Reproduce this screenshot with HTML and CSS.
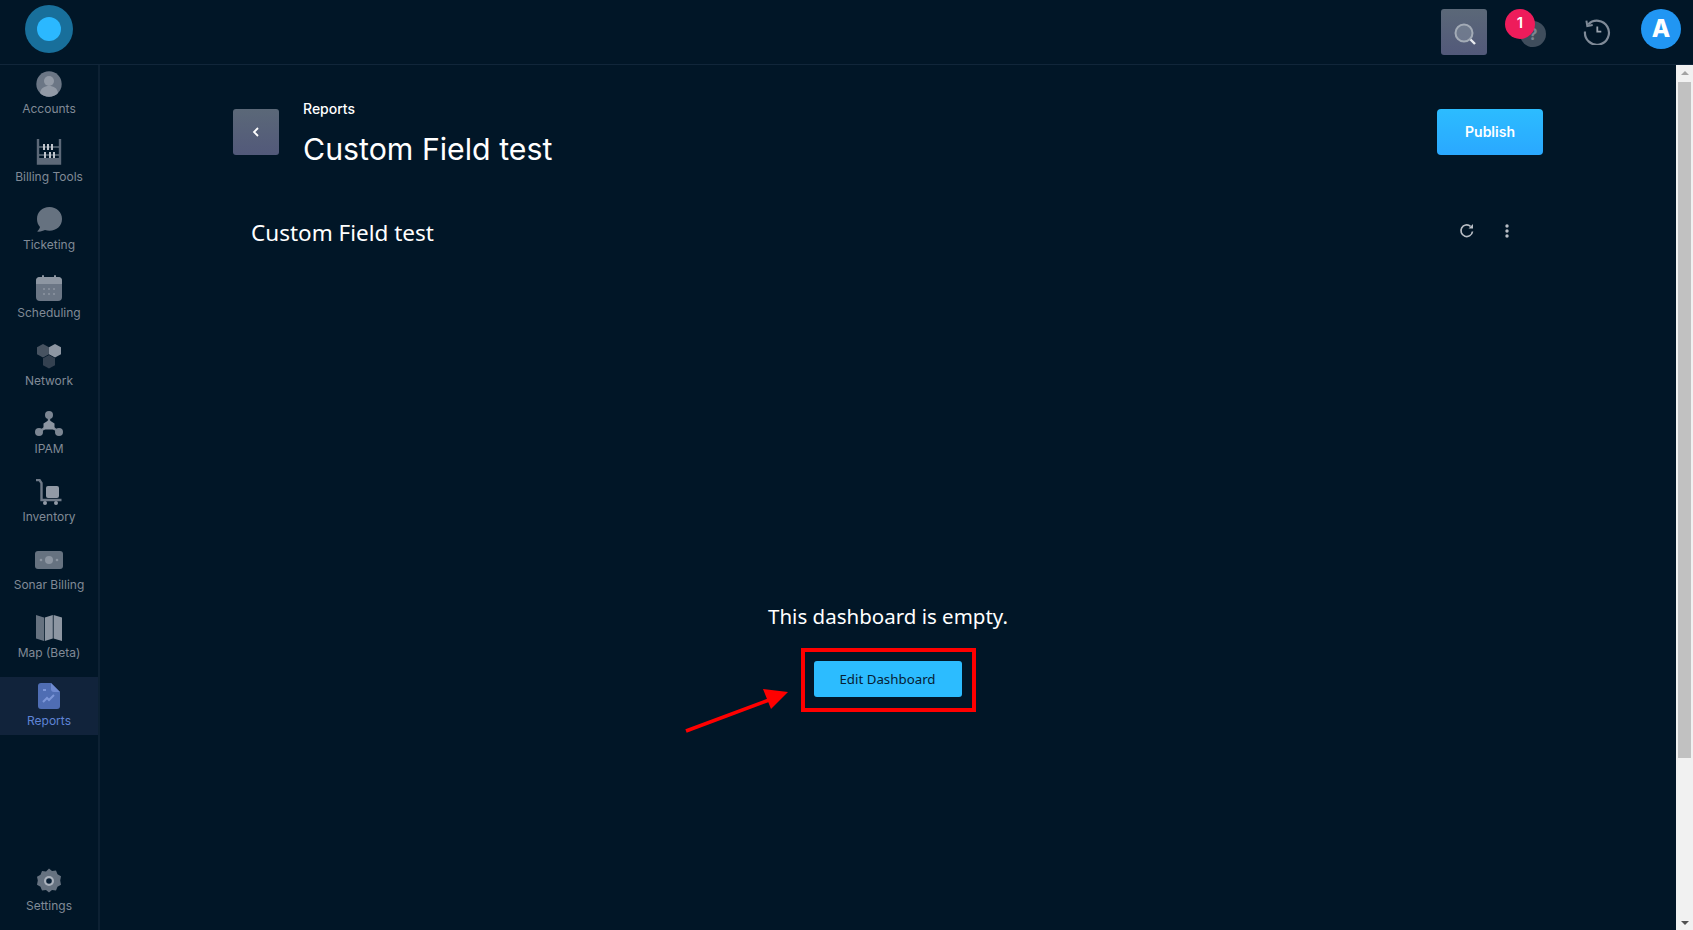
FILE: index.html
```html
<!DOCTYPE html>
<html>
<head>
  <meta charset="UTF-8">
  <title>Custom Field test</title>
  <link rel="stylesheet" href="styles.css">
</head>
<body>
  <header class="topbar">
    <div class="logo"><span class="logo-dot"></span></div>
    <div class="top-actions">
      <a class="search-btn">
        <svg width="26" height="26" viewBox="0 0 26 26"><circle cx="12" cy="12" r="8.5" fill="#8f98a6" fill-opacity=".45" stroke="#a3abb6" stroke-width="2"/><path d="M18.5 18.5l4.5 4.5" stroke="#e8eaee" stroke-width="2.4"/></svg>
      </a>
      <div class="help">
        <span class="help-circle">?</span>
        <span class="badge">1</span>
      </div>
      <a class="history">
        <svg width="28" height="28" viewBox="0 0 28 28" fill="none" stroke="#7f8a97" stroke-width="2.2"><path d="M5.2 7.5A12 12 0 1 1 2 14.5"/><path d="M3.4 3.6l.9 5.4 5.4-.9" stroke-width="2"/><path d="M14.3 9.5v5.2h4" stroke="#9aa3ae" stroke-width="1.8"/></svg>
      </a>
      <span class="avatar">A</span>
    </div>
  </header>

  <div class="layout">
    <nav class="sidebar">
      <a class="nav-item">
        <svg width="26" height="26" viewBox="0 0 26 26"><circle cx="13" cy="13" r="12.7" fill="#6b7685"/><circle cx="13" cy="10" r="5" fill="#929aa6"/><path d="M4 22c1-5 4-7 9-7s8 2 9 7a12.6 12.6 0 0 1-18 0z" fill="#929aa6"/></svg>
        <span>Accounts</span>
      </a>
      <a class="nav-item">
        <svg width="26" height="26" viewBox="0 0 26 26" fill="none"><path d="M2 0v24.500h22V0" stroke="#5d6978" stroke-width="2.400"/><path d="M3 19h20v5H3z" fill="#5d6978"/><path d="M3 8h20M3 16h20" stroke="#8b95a1" stroke-width="1.200"/><path d="M8 5v6M12 5v6M16 5v6M9 13v6M14 13v6M18 13v6" stroke="#c0c5cc" stroke-width="2"/></svg>
        <span>Billing Tools</span>
      </a>
      <a class="nav-item">
        <svg width="26" height="26" viewBox="0 0 26 26"><path d="M13.500 0C6 0 1 5 1 12c0 3 1 6 3 8-.5 2-2 3.500-3 4.500 3 .5 6-.5 8-1.500 1.500.5 3 .7 4.500.7C20.500 23.700 26 19 26 12S20.500 0 13.500 0z" fill="#667280"/></svg>
        <span>Ticketing</span>
      </a>
      <a class="nav-item">
        <svg width="26" height="26" viewBox="0 0 26 26"><rect x="0" y="2" width="26" height="24" rx="4" fill="#6b7685"/><path d="M0 6a4 4 0 0 1 4-4h18a4 4 0 0 1 4 4v3H0z" fill="#8d96a2"/><rect x="6" y="0" width="2" height="6" rx="1" fill="#8d96a2"/><rect x="18" y="0" width="2" height="6" rx="1" fill="#8d96a2"/><g fill="#8d96a2"><circle cx="8" cy="14" r="1"/><circle cx="13" cy="14" r="1"/><circle cx="18" cy="14" r="1"/><circle cx="8" cy="19" r="1"/><circle cx="13" cy="19" r="1"/><circle cx="18" cy="19" r="1"/></g></svg>
        <span>Scheduling</span>
      </a>
      <a class="nav-item">
        <svg width="26" height="26" viewBox="0 0 26 26"><path d="M7 1l6 3.300v7L7 14.600 1 11.300v-7z" fill="#475361"/><path d="M19 1l6 3.300v7l-6 3.300-6-3.300v-7z" fill="#8d96a2"/><path d="M13 12l6 3.300v7L13 25.600l-6-3.300v-7z" fill="#344150"/></svg>
        <span>Network</span>
      </a>
      <a class="nav-item">
        <svg width="28" height="26" viewBox="0 0 28 26"><path d="M14 4v12M14 14L4 21M14 14l10 7" stroke="#7c8693" stroke-width="2.400"/><circle cx="14" cy="4" r="4" fill="#7c8693"/><circle cx="4" cy="21" r="4" fill="#7c8693"/><circle cx="24" cy="21" r="4" fill="#7c8693"/><path d="M14 9l5.500 3.500v6h-11v-6z" fill="#8d96a2"/></svg>
        <span>IPAM</span>
      </a>
      <a class="nav-item">
        <svg width="28" height="26" viewBox="0 0 28 26" fill="none"><path d="M1 1h3.500l2 3v17h20" stroke="#6f7a88" stroke-width="2.400"/><rect x="11" y="7" width="13" height="12" rx="2" fill="#929aa6"/><circle cx="10" cy="24" r="2" fill="#929aa6"/><circle cx="21" cy="24" r="2" fill="#929aa6"/></svg>
        <span>Inventory</span>
      </a>
      <a class="nav-item">
        <svg width="28" height="26" viewBox="0 0 28 26"><rect x="0" y="4" width="28" height="18" rx="3" fill="#667280"/><circle cx="14" cy="13" r="4" fill="#8d96a2"/><circle cx="6" cy="13" r="1.300" fill="#8d96a2"/><circle cx="22" cy="13" r="1.300" fill="#8d96a2"/></svg>
        <span>Sonar Billing</span>
      </a>
      <a class="nav-item">
        <svg width="26" height="26" viewBox="0 0 26 26"><path d="M0 0l8 2.500V26l-8-2.500z" fill="#667280"/><path d="M8.800 2.500L16.800 0v23.500L8.800 26z" fill="#8d96a2"/><path d="M17.600 0L26 2.500V26l-8.400-2.500z" fill="#8d96a2"/></svg>
        <span>Map (Beta)</span>
      </a>
      <a class="nav-item active">
        <svg width="22" height="26" viewBox="0 0 22 26"><path d="M3 0h10l9 9v14a3 3 0 0 1-3 3H3a3 3 0 0 1-3-3V3a3 3 0 0 1 3-3z" fill="#4f6db3"/><path d="M13 0l9 9h-6a3 3 0 0 1-3-3z" fill="#6f8ad0"/><path d="M5 19l4-4 2 2 5-5" fill="none" stroke="#7c96d8" stroke-width="2"/><path d="M5 7h3" stroke="#7c96d8" stroke-width="2"/></svg>
        <span>Reports</span>
      </a>
      <a class="nav-item settings">
        <svg width="26" height="26" viewBox="0 0 26 26"><path d="M13 .500l3 2.500 4-.5 1.500 3.700 3.500 2-.8 4.300.8 4.300-3.500 2-1.500 3.700-4-.5-3 2.500-3-2.500-4 .5-1.500-3.700-3.500-2 .8-4.300L1 8.700l3.500-2L6 3l4 .5z" fill="#667280"/><circle cx="13" cy="13" r="5" fill="#aab1bb"/><circle cx="13" cy="13" r="2.800" fill="#0a2035"/></svg>
        <span>Settings</span>
      </a>
    </nav>

    <main class="content">
      <div class="page-head">
        <a class="back-btn">
          <svg width="8" height="10" viewBox="0 0 8 10" fill="none"><path d="M6 1L2 5l4 4" stroke="#fff" stroke-width="1.800"/></svg>
        </a>
        <div class="page-title">
          <div class="crumb">Reports</div>
          <h1>Custom Field test</h1>
        </div>
        <a class="publish">Publish</a>
      </div>

      <div class="dash-head">
        <h2>Custom Field test</h2>
        <div class="dash-tools">
          <svg width="16" height="16" viewBox="0 0 16 16" fill="none" stroke="#b9bec5" stroke-width="1.700"><path d="M13.500 8.500A5.800 5.800 0 1 1 11.500 3.300"/><path d="M14 1v4.500H9.500z" fill="#b9bec5" stroke="none"/></svg>
          <svg width="4" height="14" viewBox="0 0 4 14" fill="#b9bec5"><circle cx="2" cy="2" r="1.700"/><circle cx="2" cy="7" r="1.700"/><circle cx="2" cy="12" r="1.700"/></svg>
        </div>
      </div>

      <div class="empty">
        <p>This dashboard is empty.</p>
        <div class="edit-mark">
          <a class="edit-btn">Edit Dashboard</a>
        </div>
      </div>
    </main>

    <div class="scrollbar">
      <span class="arrow-up"></span>
      <span class="thumb"></span>
      <span class="arrow-down"></span>
    </div>
  </div>

  <!-- red arrow annotation from the screenshot -->
  <svg class="annotation" width="120" height="60" viewBox="0 0 120 60"><path d="M2 55L85 24" stroke="#f00" stroke-width="3.500"/><path d="M104 16L79 13l8 20z" fill="#f00"/></svg>
</body>
</html>
```

FILE: styles.css
```css
* {
  margin: 0;
  padding: 0;
  box-sizing: border-box;
}
html, body {
  height: 100%;
  overflow: hidden;
}
body {
  display: flex;
  flex-direction: column;
  background: #011627;
  color: #fff;
  font-family: Inter, "Liberation Sans", sans-serif;
}
a {
  text-decoration: none;
  cursor: pointer;
}

/* top bar */
.topbar {
  display: flex;
  justify-content: space-between;
  align-items: center;
  height: 65px;
  flex-shrink: 0;
  padding: 0 12px 6px 25px;
  border-bottom: 1px solid #11263a;
}
.logo {
  display: flex;
  align-items: center;
  justify-content: center;
  width: 48px;
  height: 48px;
  border-radius: 50%;
  background: #186f9b;
}
.logo-dot {
  width: 24px;
  height: 24px;
  border-radius: 50%;
  background: #2bb8ff;
}
.top-actions {
  display: flex;
  align-items: center;
}
.search-btn {
  display: flex;
  align-items: center;
  justify-content: center;
  width: 46px;
  height: 46px;
  margin-top: 6px;
  padding: 4px 0 0 1px;
  border-radius: 3px;
  background: linear-gradient(#5b6878, #52597a);
}
.help {
  position: relative;
  width: 46px;
  height: 46px;
  margin: 6px 0 0 18px;
}
.help-circle {
  position: absolute;
  left: 15px;
  top: 12px;
  width: 26px;
  height: 26px;
  border-radius: 50%;
  background: #3f4d5c;
  color: #7a8591;
  font-size: 16px;
  font-weight: 700;
  line-height: 26px;
  text-align: center;
}
.badge {
  position: absolute;
  left: 0;
  top: 0;
  width: 30px;
  height: 30px;
  border-radius: 50%;
  background: #ee1c5b;
  font-size: 15px;
  font-weight: 600;
  line-height: 28px;
  text-align: center;
}
.history {
  display: flex;
  margin: 4px 0 0 32px;
}
.avatar {
  width: 40px;
  height: 40px;
  margin: 0 0 0 30px;
  border-radius: 50%;
  background: #2196f3;
  font-size: 24px;
  font-weight: 800;
  line-height: 40px;
  text-align: center;
}

/* sidebar + page */
.layout {
  display: flex;
  flex: 1;
  min-height: 0;
}
.sidebar {
  display: flex;
  flex-direction: column;
  gap: 10px;
  width: 100px;
  flex-shrink: 0;
  padding-bottom: 10px;
  border-right: 2px solid #0d2133;
}
.nav-item {
  display: flex;
  flex-direction: column;
  align-items: center;
  height: 58px;
  padding-top: 6px;
  color: #808a96;
  font-size: 12px;
  line-height: 14px;
}
.nav-item svg {
  height: 26px;
  margin-bottom: 5px;
}
.nav-item.active {
  background: #11233b;
  color: #5f84d6;
}
.nav-item.settings {
  margin-top: auto;
}

.content {
  flex: 1;
  min-width: 0;
  padding: 35px 133px 0 133px;
}
.page-head {
  display: flex;
  align-items: flex-start;
}
.back-btn {
  display: flex;
  align-items: center;
  justify-content: center;
  width: 46px;
  height: 46px;
  margin-top: 9px;
  border-radius: 3px;
  background: linear-gradient(#5b6878, #52597a);
}
.page-title {
  margin-left: 24px;
}
.crumb {
  font-size: 14px;
  font-weight: 500;
  line-height: 18px;
}
.page-title h1 {
  margin-top: 10px;
  font-size: 30.300px;
  font-weight: 400;
  line-height: 42px;
}
.publish {
  width: 106px;
  height: 46px;
  margin: 9px 0 0 auto;
  border-radius: 4px;
  background: linear-gradient(#2cbcff, #2aa8ff);
  color: #fff;
  font-size: 14px;
  font-weight: 600;
  line-height: 46px;
  text-align: center;
}
.dash-head {
  display: flex;
  justify-content: space-between;
  align-items: center;
  margin-top: 47px;
  padding: 0 34px 0 18px;
}
.dash-head h2 {
  font-family: "Noto Sans", "Open Sans", sans-serif;
  font-size: 22.500px;
  font-weight: 400;
  line-height: 32px;
}
.dash-tools {
  display: flex;
  align-items: center;
  gap: 30px;
  margin-top: -4px;
}
.empty {
  display: flex;
  flex-direction: column;
  align-items: center;
  margin-top: 352px;
  font-family: "Noto Sans", "Open Sans", sans-serif;
}
.empty p {
  font-size: 20.500px;
  line-height: 30px;
}
.edit-mark {
  margin-top: 17px;
  padding: 9px 10px 11px 9px;
  border: 4px solid #f00;
}
.edit-btn {
  display: block;
  width: 148px;
  height: 36px;
  border-radius: 3px;
  background: #2cbcff;
  color: #062033;
  font-size: 13.300px;
  line-height: 36px;
  text-align: center;
}

/* fake browser scrollbar */
.scrollbar {
  display: flex;
  flex-direction: column;
  align-items: center;
  width: 17px;
  flex-shrink: 0;
  background: #f1f1f1;
}
.arrow-up {
  margin: 6px 0 4px;
  border: 4px solid transparent;
  border-top: 0;
  border-bottom: 4px solid #a3a3a3;
}
.thumb {
  width: 13px;
  height: 676px;
  margin-top: 3px;
  background: #c1c1c1;
}
.arrow-down {
  margin-top: auto;
  margin-bottom: 5px;
  border: 4px solid transparent;
  border-bottom: 0;
  border-top: 4px solid #505050;
}

.annotation {
  position: absolute;
  left: 684px;
  top: 676px;
}
```
